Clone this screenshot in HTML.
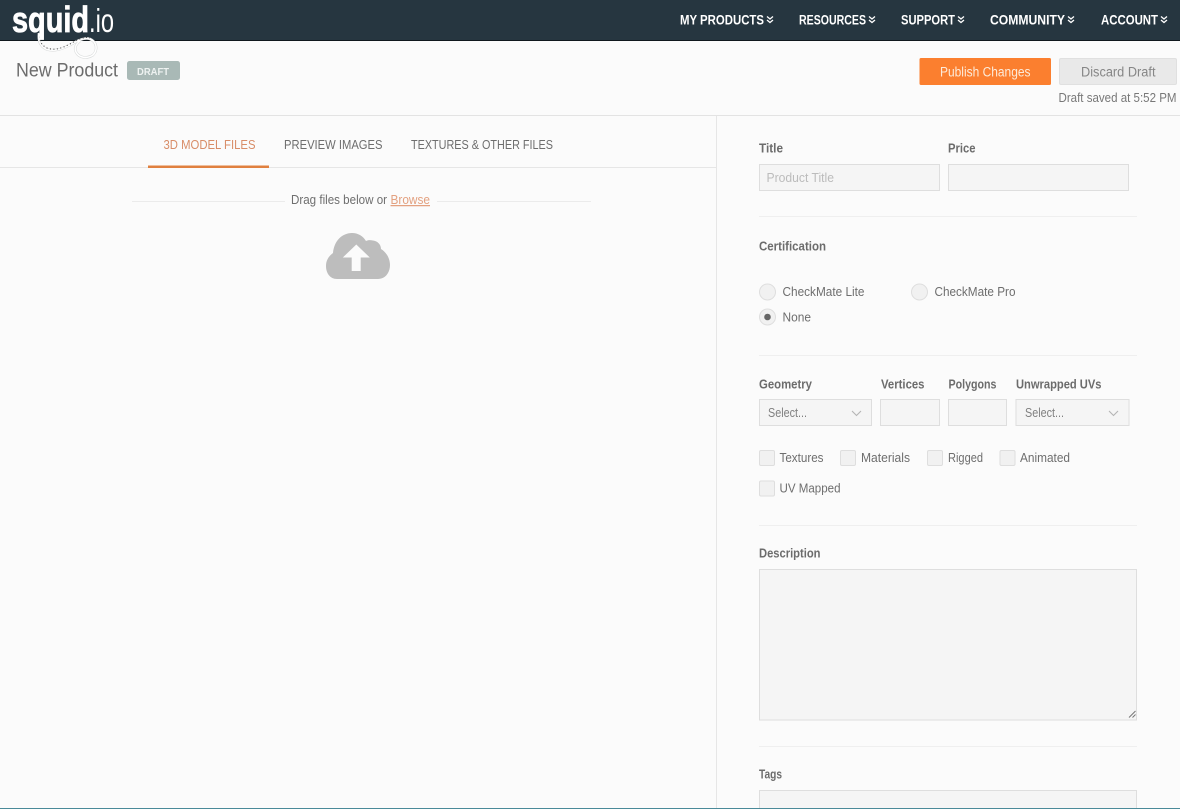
<!DOCTYPE html>
<html lang="en">
<head>
<meta charset="utf-8">
<title>New Product</title>
<style>
html,body{margin:0;padding:0;width:1180px;height:809px;overflow:hidden;background:#fbfbfb}
svg{display:block}
text{font-family:"Liberation Sans",sans-serif;font-size:12.5px;fill:#6f6f6f}
.n{font-weight:700;font-size:13.5px;fill:#fff}
.l{font-weight:700;font-size:12.5px;fill:#6c6c6c}
.t{font-size:12.5px;fill:#6e6e6e}
.i{fill:#f5f5f5;stroke:#dedede;stroke-width:1}
.hr{stroke:#efefef;stroke-width:1}
.c{fill:none;stroke:#fff;stroke-width:1.3}
.r{fill:#f1f1f1;stroke:#dedede;stroke-width:1}
</style>
</head>
<body>
<svg width="1180" height="809" viewBox="0 0 1180 809" xmlns="http://www.w3.org/2000/svg">
<rect width="1180" height="809" fill="#fbfbfb"/>
<rect width="1180" height="40" fill="#263640"/>
<rect y="40" width="1180" height="1" fill="#10181d"/>

<!-- logo tail -->
<path d="M39 33C38 41 40 46 46 49C54 52 62 49 70 45C77 41 84 37 90 39C97 42 98 50 93 55C87 59 79 58 76 52C74 48 76 44 80 41" fill="none" stroke="#d6d8d8" stroke-width="2.600"/>
<path d="M39 33C38 41 40 46 46 49C54 52 62 49 70 45C77 41 84 37 90 39C97 42 98 50 93 55C87 59 79 58 76 52C74 48 76 44 80 41" fill="none" stroke="#fff" stroke-width="1.600"/>
<path d="M40 33C39 41 41 45 47 48C55 51 62 48 70 44C77 40 84 36 90 38" fill="none" stroke="#4c4c4c" stroke-width="1.100" stroke-dasharray="1 2.500"/>

<!-- logo -->
<text x="12" y="32" textLength="77" lengthAdjust="spacingAndGlyphs" style="font-size:36px;font-weight:700;fill:#fff;stroke:#fff;stroke-width:.8">squid</text>
<text x="89" y="32" textLength="25" lengthAdjust="spacingAndGlyphs" style="font-size:33px;fill:#fff">.io</text>

<!-- nav -->
<text class="n" x="680" y="24.500" textLength="84" lengthAdjust="spacingAndGlyphs">MY PRODUCTS</text>
<path class="c" d="M767 16.500l3 2.500l3-2.500M767 20l3 2.500l3-2.500"/>
<text class="n" x="799" y="24.500" textLength="67" lengthAdjust="spacingAndGlyphs">RESOURCES</text>
<path class="c" d="M869 16.500l3 2.500l3-2.500M869 20l3 2.500l3-2.500"/>
<text class="n" x="901" y="24.500" textLength="54" lengthAdjust="spacingAndGlyphs">SUPPORT</text>
<path class="c" d="M958 16.500l3 2.500l3-2.500M958 20l3 2.500l3-2.500"/>
<text class="n" x="990" y="24.500" textLength="75" lengthAdjust="spacingAndGlyphs">COMMUNITY</text>
<path class="c" d="M1068 16.500l3 2.500l3-2.500M1068 20l3 2.500l3-2.500"/>
<text class="n" x="1101" y="24.500" textLength="57" lengthAdjust="spacingAndGlyphs">ACCOUNT</text>
<path class="c" d="M1161 16.500l3 2.500l3-2.500M1161 20l3 2.500l3-2.500"/>

<!-- header -->
<text x="16" y="76.500" textLength="102" lengthAdjust="spacingAndGlyphs" style="font-size:19px;fill:#6c6c6c">New Product</text>
<rect x="127" y="61" width="53" height="19" rx="2.500" fill="#a9b9b6"/>
<text x="137" y="75" textLength="32" lengthAdjust="spacingAndGlyphs" style="font-size:10px;font-weight:700;fill:#eef2f1">DRAFT</text>
<rect x="919.500" y="58" width="131.500" height="27" rx="1.500" fill="#fb7f2f"/>
<text x="940" y="76.500" textLength="90.500" lengthAdjust="spacingAndGlyphs" style="font-size:13.500px;fill:#fdebd9">Publish Changes</text>
<rect x="1059.500" y="58.500" width="117" height="26" rx="1.500" fill="#e9e9e9" stroke="#e0e0e0"/>
<text x="1081" y="76.500" textLength="74.500" lengthAdjust="spacingAndGlyphs" style="font-size:13.500px;fill:#868686">Discard Draft</text>
<text x="1058.500" y="102" textLength="118" lengthAdjust="spacingAndGlyphs" style="font-size:12.500px;fill:#787878">Draft saved at 5:52 PM</text>
<rect y="115" width="1180" height="1" fill="#e3e3e3"/>
<rect x="716" y="116" width="1" height="692" fill="#e6e6e6"/>

<!-- tabs -->
<rect y="167" width="716" height="1" fill="#e6e6e6"/>
<rect x="148" y="165.500" width="121" height="2.500" fill="#e0803f"/>
<text x="163.500" y="149" textLength="92" lengthAdjust="spacingAndGlyphs" style="font-size:13px;fill:#d88d68">3D MODEL FILES</text>
<text x="284" y="149" textLength="98.500" lengthAdjust="spacingAndGlyphs" class="t" style="font-size:13px">PREVIEW IMAGES</text>
<text x="411" y="149" textLength="142" lengthAdjust="spacingAndGlyphs" class="t" style="font-size:13px">TEXTURES &amp; OTHER FILES</text>

<!-- drag -->
<rect x="132" y="201" width="153" height="1" fill="#ebebeb"/>
<rect x="437" y="201" width="154" height="1" fill="#ebebeb"/>
<text x="291" y="204" textLength="96" lengthAdjust="spacingAndGlyphs" class="t">Drag files below or</text>
<text x="390.500" y="204" textLength="39.500" lengthAdjust="spacingAndGlyphs" style="font-size:12.500px;fill:#e3a180;text-decoration:underline">Browse</text>

<!-- cloud -->
<path fill="#bdbdbd" d="M337 279C330 279 326 273 326 266C326 260 329 256 333 253C334 241 342 233 352 233C358 233 363 236 366 241C368 240 370 240 373 240.500C378 241 381 245 381 249C386 252 390 258 390 265C390 273 385 279 378 279Z"/>
<path fill="#fbfbfb" d="M356.300 244.500L342.800 257.500H351.700V271H360.700V257.500H369.800Z"/>

<!-- Title / Price -->
<text class="l" x="759" y="152.500" textLength="24" lengthAdjust="spacingAndGlyphs">Title</text>
<text class="l" x="948" y="152.500" textLength="27.500" lengthAdjust="spacingAndGlyphs">Price</text>
<rect class="i" x="759.500" y="164.500" width="180" height="26"/>
<rect class="i" x="948.500" y="164.500" width="180" height="26"/>
<text x="766.500" y="182" textLength="67.500" lengthAdjust="spacingAndGlyphs" style="font-size:12.500px;fill:#bcbcbc">Product Title</text>
<line class="hr" x1="759" x2="1137" y1="216.500" y2="216.500"/>

<!-- Certification -->
<text class="l" x="759" y="250.500" textLength="67" lengthAdjust="spacingAndGlyphs">Certification</text>
<circle class="r" cx="767.500" cy="292" r="8"/>
<text class="t" x="782.500" y="296" textLength="82" lengthAdjust="spacingAndGlyphs">CheckMate Lite</text>
<circle class="r" cx="919.500" cy="292" r="8"/>
<text class="t" x="934.500" y="296" textLength="81" lengthAdjust="spacingAndGlyphs">CheckMate Pro</text>
<circle class="r" cx="767.500" cy="317" r="8"/>
<circle cx="767.500" cy="317" r="3.300" fill="#666"/>
<text class="t" x="782.500" y="321.500" textLength="28.500" lengthAdjust="spacingAndGlyphs">None</text>
<line class="hr" x1="759" x2="1137" y1="355.500" y2="355.500"/>

<!-- Geometry row -->
<text class="l" x="759" y="388.500" textLength="53" lengthAdjust="spacingAndGlyphs">Geometry</text>
<text class="l" x="881" y="388.500" textLength="43.500" lengthAdjust="spacingAndGlyphs">Vertices</text>
<text class="l" x="948.500" y="388.500" textLength="48" lengthAdjust="spacingAndGlyphs">Polygons</text>
<text class="l" x="1016" y="388.500" textLength="85.500" lengthAdjust="spacingAndGlyphs">Unwrapped UVs</text>
<rect class="i" x="759.500" y="399.500" width="112" height="26"/>
<rect class="i" x="880.500" y="399.500" width="59" height="26"/>
<rect class="i" x="948.500" y="399.500" width="58" height="26"/>
<rect class="i" x="1016" y="399.500" width="113" height="26"/>
<text x="768" y="417" textLength="39" lengthAdjust="spacingAndGlyphs" style="font-size:12.500px;fill:#808080">Select...</text>
<text x="1025" y="417" textLength="39" lengthAdjust="spacingAndGlyphs" style="font-size:12.500px;fill:#808080">Select...</text>
<path d="M852 411l4.500 4.500l4.500-4.500M1109 411l4.500 4.500l4.500-4.500" fill="none" stroke="#b5b5b5" stroke-width="1.100"/>

<!-- checkboxes -->
<rect class="r" x="759.500" y="450.500" width="15" height="15" rx="1.500"/>
<text class="t" x="779.500" y="462" textLength="44" lengthAdjust="spacingAndGlyphs">Textures</text>
<rect class="r" x="840.500" y="450.500" width="15" height="15" rx="1.500"/>
<text class="t" x="861" y="462" textLength="49" lengthAdjust="spacingAndGlyphs">Materials</text>
<rect class="r" x="927.500" y="450.500" width="15" height="15" rx="1.500"/>
<text class="t" x="948" y="462" textLength="35" lengthAdjust="spacingAndGlyphs">Rigged</text>
<rect class="r" x="1000" y="450.500" width="15" height="15" rx="1.500"/>
<text class="t" x="1020" y="462" textLength="50" lengthAdjust="spacingAndGlyphs">Animated</text>
<rect class="r" x="759.500" y="481" width="15" height="15" rx="1.500"/>
<text class="t" x="779.500" y="492.500" textLength="61" lengthAdjust="spacingAndGlyphs">UV Mapped</text>
<line class="hr" x1="759" x2="1137" y1="525.500" y2="525.500"/>

<!-- Description -->
<text class="l" x="759" y="557.500" textLength="61.500" lengthAdjust="spacingAndGlyphs">Description</text>
<rect class="i" x="759.500" y="569.500" width="377" height="150.500"/>
<path d="M1129 717.500l6.500-6.500M1132.500 717.500l3-3" stroke="#777" stroke-width="1" fill="none"/>
<line class="hr" x1="759" x2="1137" y1="746.500" y2="746.500"/>

<!-- Tags -->
<text class="l" x="759" y="778.500" textLength="23" lengthAdjust="spacingAndGlyphs">Tags</text>
<rect class="i" x="759.500" y="790.500" width="377" height="30"/>

<rect y="808" width="1180" height="1" fill="#4a8a99"/>
</svg>
</body>
</html>
